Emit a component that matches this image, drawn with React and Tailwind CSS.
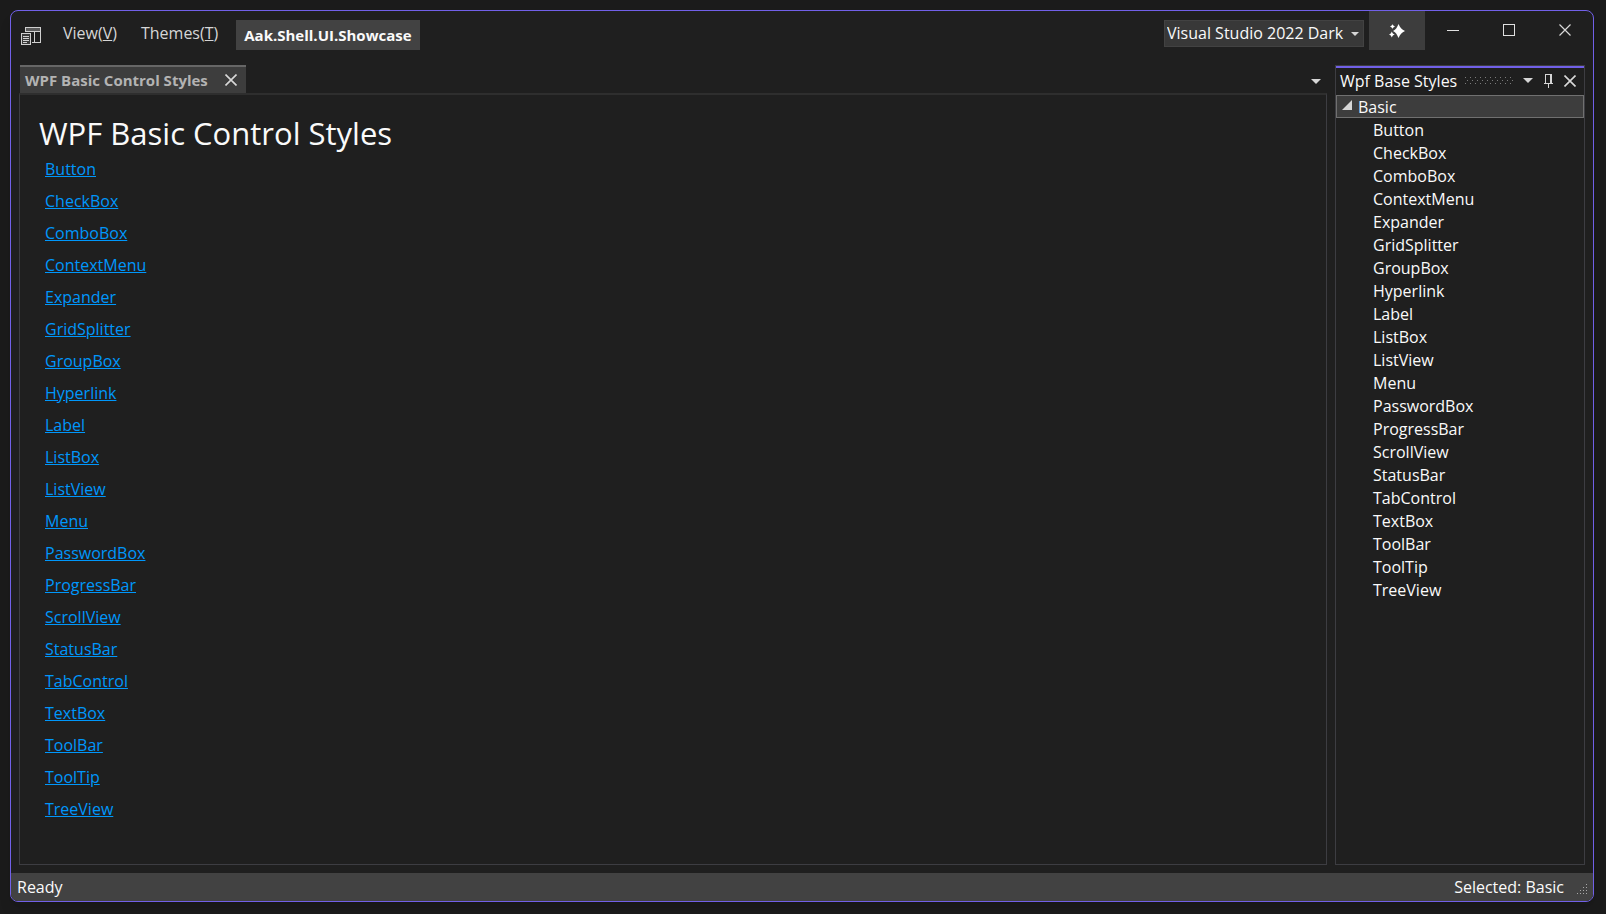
import React, { useState } from 'react';

const controls = [
  'Button',
  'CheckBox',
  'ComboBox',
  'ContextMenu',
  'Expander',
  'GridSplitter',
  'GroupBox',
  'Hyperlink',
  'Label',
  'ListBox',
  'ListView',
  'Menu',
  'PasswordBox',
  'ProgressBar',
  'ScrollView',
  'StatusBar',
  'TabControl',
  'TextBox',
  'ToolBar',
  'ToolTip',
  'TreeView',
];

const themes = ['Visual Studio 2022 Dark', 'Visual Studio 2022 Light', 'Visual Studio 2022 Blue'];

// Icons
const AppIcon = () => (
  <svg width="20" height="18" viewBox="0 0 20 18" fill="none" stroke="#d0d0d0" shapeRendering="crispEdges">
    <path d="M4.5 5V0.5h15v15H11M4.5 4.5h15M13.5 5v10" />
    <path d="M5 1h14v3H5z" fill="#5a5a5a" stroke="none" />
    <path d="M0.5 6.5h9v11h-9z" fill="#3a3a3a" />
    <path d="M2 9.5h6M2 11.5h6M2 13.5h6M2 15.5h4" />
  </svg>
);

const SparkleIcon = () => (
  <svg width="16" height="16" viewBox="0 0 16 16" fill="#fff">
    <path d="M9.5 1C10.9 4.4 12.8 6.6 16 8C12.8 9.4 10.9 11.6 9.5 15C8.1 11.6 7 9.4 4 8C7 6.6 8.1 4.4 9.5 1z" />
    <path d="M3.5 1C4 2.4 4.6 3 6 3.5C4.6 4 4 4.6 3.5 6C3 4.6 2.4 4 1 3.5C2.4 3 3 2.4 3.5 1z" />
    <path d="M2.8 8.5C3.4 10.2 4.1 10.900 5.700 11.500C4.100 12.100 3.400 12.800 2.800 14.500C2.200 12.800 1.500 12.100 0 11.500C1.500 10.900 2.200 10.200 2.800 8.500z" />
  </svg>
);

const MinimizeIcon = () => (
  <svg width="12" height="12" viewBox="0 0 12 12" stroke="#e0e0e0" shapeRendering="crispEdges">
    <path d="M0 6.5h12" />
  </svg>
);

const MaximizeIcon = () => (
  <svg width="12" height="12" viewBox="0 0 12 12" fill="none" stroke="#e0e0e0" shapeRendering="crispEdges">
    <path d="M0.5 0.5h11v11h-11z" />
  </svg>
);

const CloseIcon = ({ bold }) => (
  <svg width="12" height="12" viewBox="0 0 12 12" stroke="#d8d8d8" strokeWidth={bold ? 1.6 : 1.2}>
    <path d="M0.5 0.5l11 11M11.5 0.5l-11 11" />
  </svg>
);

const ArrowIcon = ({ className }) => (
  <svg className={className} width="10" height="5" viewBox="0 0 10 5" fill="#d6d6d6">
    <path d="M0 0h10L5 5z" />
  </svg>
);

const PinIcon = () => (
  <svg width="9" height="14" viewBox="0 0 9 14" fill="none" stroke="#d6d6d6" shapeRendering="crispEdges">
    <path d="M1.5 9V0.5h6V9M6.5 1v8M0 9.5h9M4.5 10v4" />
  </svg>
);

const GripDots = () => (
  <svg className="h-[7px] min-w-0 flex-1">
    <defs>
      <pattern id="grip" width="5" height="6" patternUnits="userSpaceOnUse">
        <path d="M0 0h1v1H0zM2 3h1v1H2z" fill="#7a7a7a" shapeRendering="crispEdges" />
      </pattern>
    </defs>
    <rect width="100%" height="7" fill="url(#grip)" />
  </svg>
);

const ResizeGrip = () => (
  <svg width="10" height="10" viewBox="0 0 10 10" fill="#a8a8a8" shapeRendering="crispEdges">
    <path d="M9 0h1v1H9zM6 3h1v1H6zM9 3h1v1H9zM3 6h1v1H3zM6 6h1v1H6zM9 6h1v1H9zM0 9h1v1H0zM3 9h1v1H3zM6 9h1v1H6zM9 9h1v1H9z" />
  </svg>
);

const TitleBar = () => {
  const [theme, setTheme] = useState(themes[0]);

  return (
    <header className="flex h-[39px] shrink-0 items-start justify-between pl-[10px]">
      <div className="flex items-start">
        <div className="mt-4 mr-3">
          <AppIcon />
        </div>
        <nav className="mt-[9px] flex gap-1 text-[#d6d6d6]">
          <button className="h-[25px] px-[10px]">
            View(<u className="underline-offset-1">V</u>)
          </button>
          <button className="h-[25px] px-[10px]">
            Themes(<u className="underline-offset-1">T</u>)
          </button>
        </nav>
        <div className="mt-[9px] ml-2 flex h-[30px] items-center bg-[#424242] px-2 text-[15px] font-bold text-[#fafafa]">
          Aak.Shell.UI.Showcase
        </div>
      </div>

      <div className="flex">
        <div className="relative mt-[9px] mr-[5px]">
          <select
            aria-label="Theme"
            value={theme}
            onChange={(e) => setTheme(e.target.value)}
            className="h-[27px] w-50 appearance-none border border-[#424242] bg-[#383838] pb-[2px] pl-[2px] text-[#fafafa]"
          >
            {themes.map((name) => (
              <option key={name}>{name}</option>
            ))}
          </select>
          <ArrowIcon className="pointer-events-none absolute top-3 right-[5px] h-1 w-2" />
        </div>
        <button aria-label="What's new" className="flex h-[39px] w-14 items-center justify-center bg-[#3d3d3d]">
          <SparkleIcon />
        </button>
        <button aria-label="Minimize" className="flex h-[38px] w-14 items-center justify-center">
          <MinimizeIcon />
        </button>
        <button aria-label="Maximize" className="flex h-[38px] w-14 items-center justify-center">
          <MaximizeIcon />
        </button>
        <button aria-label="Close" className="flex h-[38px] w-14 items-center justify-center">
          <CloseIcon />
        </button>
      </div>
    </header>
  );
};

const DocumentArea = () => (
  <main className="flex min-w-0 flex-1 flex-col">
    <div className="flex h-7 shrink-0 items-center justify-between pr-[6px]">
      <div className="ml-px flex h-7 items-center border-t-2 border-[#666] bg-[#3d3d3d] pr-[9px] pl-[5px]">
        <span className="text-[15px] font-bold text-[#b3b3b3]">WPF Basic Control Styles</span>
        <button aria-label="Close tab" className="ml-[17px]">
          <CloseIcon bold />
        </button>
      </div>
      <button aria-label="Open documents" className="pt-1">
        <ArrowIcon />
      </button>
    </div>
    <div className="flex-1 border border-t-2 border-[#3d3d42] border-t-[#2e2e2e] px-[19px] pt-4">
      <h1 className="text-[31px] leading-[44px] text-[#fafafa]">WPF Basic Control Styles</h1>
      <ul className="pl-[6px]">
        {controls.map((name) => (
          <li key={name} className="h-8 leading-7">
            <a href={`#${name}`} className="text-[#0097fb] underline underline-offset-1">
              {name}
            </a>
          </li>
        ))}
      </ul>
    </div>
  </main>
);

const ToolWindow = () => (
  <aside className="flex w-[250px] shrink-0 flex-col border border-[#3d3d42] text-[#fafafa]">
    <div className="flex h-[29px] shrink-0 items-center border-t-2 border-[#7160e8] pr-2 pb-[2px] pl-1">
      <h2>Wpf Base Styles</h2>
      <div className="mr-[9px] ml-2 flex min-w-0 flex-1">
        <GripDots />
      </div>
      <div className="flex items-center gap-[11px]">
        <button aria-label="Window position">
          <ArrowIcon />
        </button>
        <button aria-label="Auto hide">
          <PinIcon />
        </button>
        <button aria-label="Close panel">
          <CloseIcon bold />
        </button>
      </div>
    </div>
    <ul role="tree" aria-label="Wpf Base Styles">
      <li role="treeitem" aria-expanded="true" aria-selected="true">
        <div className="flex h-[23px] items-center gap-[6px] border border-[#707070] bg-[#3d3d3d] pl-[5px]">
          <svg className="mb-1" width="10" height="10" viewBox="0 0 10 10" fill="#d6d6d6">
            <path d="M10 0v10H0z" />
          </svg>
          Basic
        </div>
        <ul role="group">
          {controls.map((name) => (
            <li key={name} role="treeitem" aria-selected="false" className="h-[23px] pl-[37px] leading-[25px]">
              {name}
            </li>
          ))}
        </ul>
      </li>
    </ul>
  </aside>
);

export default function App() {
  return (
    <div className="flex min-h-screen bg-[#1b1b1b] pt-[10px] pr-3 pb-3 pl-[10px] font-['Open_Sans','Noto_Sans',sans-serif] text-base leading-5">
      <div className="flex flex-1 flex-col overflow-hidden rounded-lg border border-[#7160e8] bg-[#1f1f1f] shadow-lg">
        <TitleBar />
        <div className="flex flex-1 gap-2 px-2 pt-[15px] pb-2">
          <DocumentArea />
          <ToolWindow />
        </div>
        <footer className="flex h-7 shrink-0 items-center bg-[#424242] pr-[6px] pl-[6px] text-[#fafafa]">
          <span className="flex-1">Ready</span>
          <span>Selected: Basic</span>
          <div className="mt-1 ml-[13px]">
            <ResizeGrip />
          </div>
        </footer>
      </div>
    </div>
  );
}
